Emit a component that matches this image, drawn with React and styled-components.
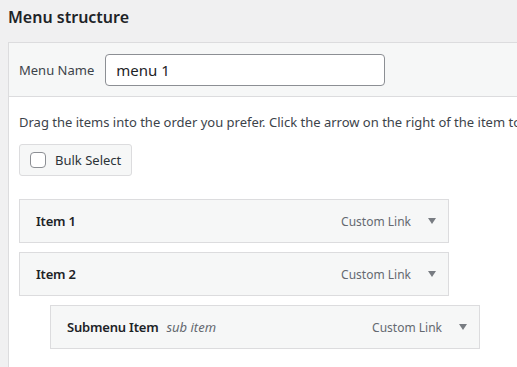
import React from "react";
import styled, { createGlobalStyle } from "styled-components";

const GlobalStyle = createGlobalStyle`
  html, body {
    margin: 0;
    padding: 0;
    background: #f0f0f1;
    overflow: hidden;
  }
  body {
    font-family: "Noto Sans", "Open Sans", sans-serif;
    color: #1d2327;
  }
`;

const Page = styled.div`
  width: 517px;
  height: 367px;
  padding: 0 0 0 8px;
  box-sizing: border-box;
  overflow: hidden;
`;

const Heading = styled.h2`
  margin: 0;
  height: 42px;
  font-size: 16px;
  font-weight: 600;
  line-height: 34px;
  color: #1d2327;
`;

const Panel = styled.div`
  width: 700px;
  border: 1px solid #dcdcde;
  background: #fff;
  min-height: 400px;
`;

const PanelHeader = styled.div`
  display: flex;
  align-items: center;
  gap: 11px;
  height: 53px;
  padding: 0 10px;
  background: #f6f7f7;
  border-bottom: 1px solid #dcdcde;
`;

const Label = styled.label`
  font-size: 13px;
  color: #3c434a;
`;

const NameInput = styled.input`
  width: 280px;
  height: 32px;
  box-sizing: border-box;
  padding: 0 10px;
  border: 1px solid #8c8f94;
  border-radius: 4px;
  background: #fff;
  font-family: inherit;
  font-size: 15px;
  color: #1d2327;
  outline: none;
`;

const PanelBody = styled.div`
  padding: 16px 10px;
  display: flex;
  flex-direction: column;
  align-items: flex-start;
`;

const Hint = styled.p`
  margin: 0 0 13px;
  font-size: 13px;
  color: #3c434a;
  white-space: nowrap;
`;

const BulkButton = styled.button`
  display: flex;
  align-items: center;
  gap: 9px;
  height: 32px;
  padding: 0 10px;
  box-sizing: border-box;
  background: #f6f7f7;
  border: 1px solid #dcdcde;
  border-radius: 3px;
  font-family: inherit;
  font-size: 13px;
  color: #2c3338;
  margin-bottom: 23px;
`;

const Checkbox = styled.span`
  width: 16px;
  height: 16px;
  box-sizing: border-box;
  border: 1px solid #8c8f94;
  border-radius: 4px;
  background: #fff;
`;

const ItemList = styled.ul`
  list-style: none;
  margin: 0;
  padding: 0;
  display: flex;
  flex-direction: column;
  gap: 9px;
`;

const Item = styled.li`
  display: flex;
  align-items: center;
  width: 430px;
  height: 44px;
  box-sizing: border-box;
  margin-left: ${(p) => p.$depth * 31}px;
  padding: 0 12px 0 16px;
  background: #f6f7f7;
  border: 1px solid #dcdcde;
`;

const ItemTitle = styled.span`
  font-size: 13px;
  font-weight: 600;
  letter-spacing: -0.2px;
  color: #1d2327;
`;

const SubLabel = styled.span`
  margin-left: 8px;
  font-size: 13px;
  font-style: italic;
  color: #646970;
`;

const ItemType = styled.span`
  margin-left: auto;
  font-size: 12px;
  color: #646970;
`;

const Arrow = styled.span`
  margin-left: 17px;
  width: 0;
  height: 0;
  border-left: 4.5px solid transparent;
  border-right: 4.5px solid transparent;
  border-top: 6px solid #787c82;
`;

const items = [
  { title: "Item 1", depth: 0 },
  { title: "Item 2", depth: 0 },
  { title: "Submenu Item", sub: "sub item", depth: 1 },
];

function App() {
  return (
    <Page>
      <GlobalStyle />
      <Heading>Menu structure</Heading>
      <Panel>
        <PanelHeader>
          <Label>Menu Name</Label>
          <NameInput defaultValue="menu 1" />
        </PanelHeader>
        <PanelBody>
          <Hint>
            Drag the items into the order you prefer. Click the arrow on the
            right of the item to reveal additional configuration options.
          </Hint>
          <BulkButton>
            <Checkbox />
            Bulk Select
          </BulkButton>
          <ItemList>
            {items.map((item) => (
              <Item key={item.title} $depth={item.depth}>
                <ItemTitle>{item.title}</ItemTitle>
                {item.sub && <SubLabel>{item.sub}</SubLabel>}
                <ItemType>Custom Link</ItemType>
                <Arrow />
              </Item>
            ))}
          </ItemList>
        </PanelBody>
      </Panel>
    </Page>
  );
}

export default App;
